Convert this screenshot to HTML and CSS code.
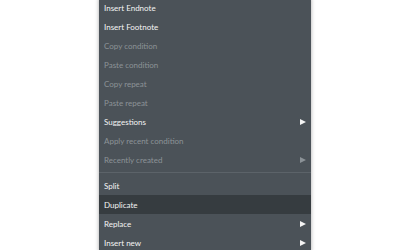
FILE: index.html
```html
<!DOCTYPE html>
<html lang="en">

<head>
    <meta charset="UTF-8">
    <title>Context menu</title>
    <link rel="stylesheet" href="styles.css">
</head>

<body>
    <div class="menu">
        <div class="item">Insert Endnote</div>
        <div class="item">Insert Footnote</div>
        <div class="item disabled">Copy condition</div>
        <div class="item disabled">Paste condition</div>
        <div class="item disabled">Copy repeat</div>
        <div class="item disabled">Paste repeat</div>
        <div class="item sub">Suggestions</div>
        <div class="item disabled">Apply recent condition</div>
        <div class="item disabled sub">Recently created</div>
        <div class="separator"></div>
        <div class="item">Split</div>
        <div class="item active">Duplicate</div>
        <div class="item sub">Replace</div>
        <div class="item sub">Insert new</div>
    </div>
</body>

</html>
```

FILE: styles.css
```css
body {
    margin: 0;
    background-color: #ffffff;
    font-family: Lato, sans-serif;
}

.menu {
    width: 212px;
    margin-left: 99px;
    margin-top: -2px;
    background-color: #4b5258;
    box-shadow: 0 0 4px rgba(0, 0, 0, 0.35);
}

.item {
    display: flex;
    align-items: center;
    justify-content: space-between;
    height: 19px;
    padding: 0 5px 0 5px;
    font-size: 8px;
    color: #f4f4f4;
}

.item.disabled {
    color: #8b9297;
}

.item.active {
    background-color: #363c40;
}

.item.sub::after {
    content: "";
    width: 0;
    height: 0;
    border-top: 3.5px solid transparent;
    border-bottom: 3.5px solid transparent;
    border-left: 6px solid #f4f4f4;
}

.item.disabled.sub::after {
    border-left-color: #8b9297;
}

.separator {
    height: 1px;
    margin: 3px 0 3px 0;
    background-color: #5c6369;
}
```
